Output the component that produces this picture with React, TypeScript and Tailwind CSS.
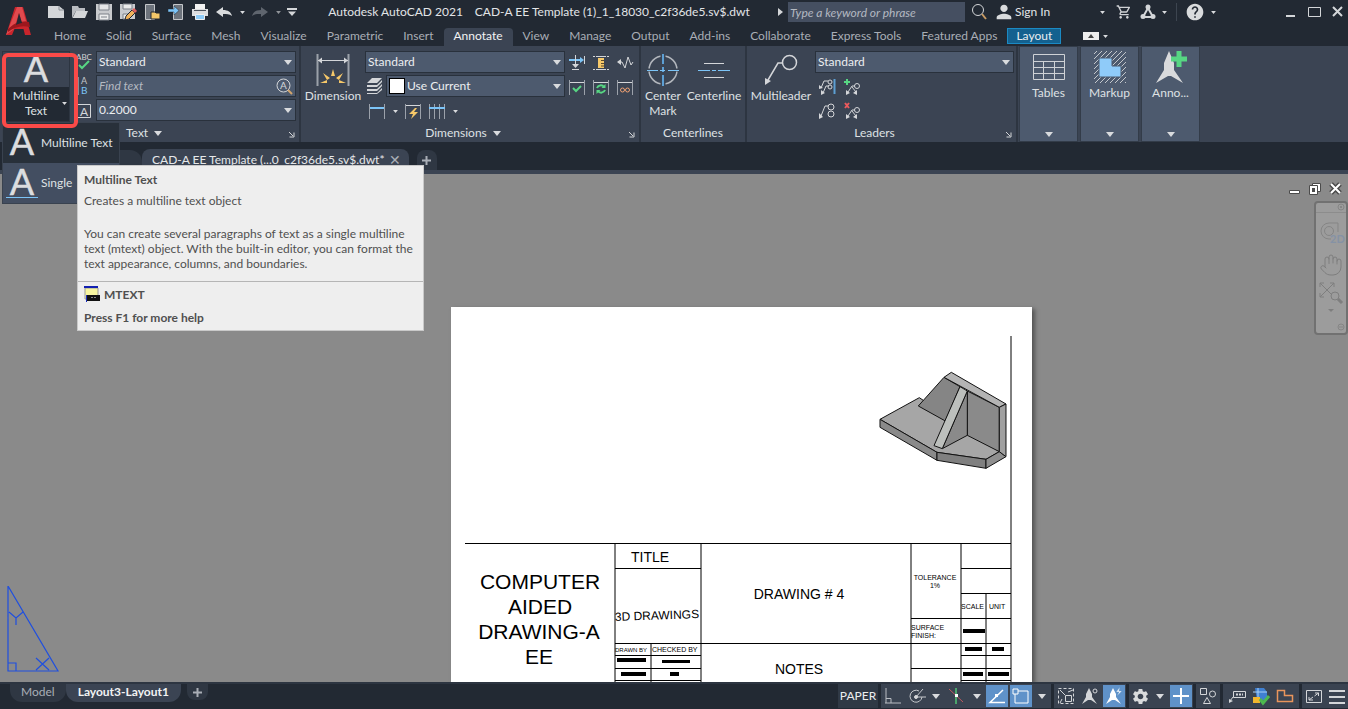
import type { ReactNode } from 'react'
import clsx from 'clsx'
import { MdHelp, MdPerson, MdSettings, MdOutlineShoppingCart } from 'react-icons/md'
import { Hand } from 'lucide-react'

const menuTabs = [
  'Home', 'Solid', 'Surface', 'Mesh', 'Visualize', 'Parametric', 'Insert', 'Annotate', 'View',
  'Manage', 'Output', 'Add-ins', 'Collaborate', 'Express Tools', 'Featured Apps',
]

type IconProps = { w?: number; h?: number; children: ReactNode }

function Icon({ w = 18, h = 18, children }: IconProps) {
  return (
    <svg width={w} height={h} viewBox={`0 0 ${w} ${h}`} fill="none" stroke="#d4d6d9" aria-hidden="true" className="block shrink-0 overflow-visible">
      {children}
    </svg>
  )
}

function Caret({ small, className }: { small?: boolean; className?: string }) {
  return (
    <svg width={small ? 5 : 8} height={small ? 3 : 5} viewBox="0 0 8 5" aria-hidden="true" className={clsx('block shrink-0', className)}>
      <path d="M0 0h8L4 5z" fill="#d9dbde" />
    </svg>
  )
}

function IconButton({ label, className, children }: { label: string; className?: string; children: ReactNode }) {
  return (
    <button aria-label={label} className={clsx('flex h-6 shrink-0 items-center justify-center', className ?? 'w-6')}>
      {children}
    </button>
  )
}

function Combo({ label, value, swatch }: { label: string; value: string; swatch?: boolean }) {
  return (
    <div className="relative flex h-[22px] flex-1 items-center border border-[#29313c] bg-[#4d5a6e]">
      {swatch && <span className="ml-0.5 size-4 shrink-0 border border-black bg-white" />}
      <select aria-label={label} className="h-full w-full appearance-none bg-transparent px-0.5 text-[12px] leading-4 text-[#eceef0] outline-none">
        <option>{value}</option>
      </select>
      <Caret className="pointer-events-none absolute right-[3px]" />
    </div>
  )
}

function Launcher() {
  return (
    <button aria-label="Dialog launcher" className="absolute right-1 bottom-1">
      <Icon w={7} h={7}>
        <path d="M1 1l4 4M6 1.5V6H1.5" />
      </Icon>
    </button>
  )
}

function Panel({ title, menu, launcher, className, children }: { title: string; menu?: boolean; launcher?: boolean; className?: string; children: ReactNode }) {
  return (
    <section className={clsx('relative flex shrink-0 flex-col border-r-2 border-[#2d3541]', className)}>
      <div className="flex flex-1 pt-[5px]">{children}</div>
      <div className={clsx('flex h-[18px] items-center justify-center gap-1.5', launcher && 'pr-3.5')}>
        {title}
        {menu && <Caret />}
      </div>
      {launcher && <Launcher />}
    </section>
  )
}

function BigButton({ className, icon, children }: { className?: string; icon: ReactNode; children: ReactNode }) {
  return (
    <button className={clsx('flex shrink-0 flex-col items-center leading-[15px]', className)}>
      <span className="flex h-[37px] items-center">{icon}</span>
      {children}
    </button>
  )
}

function FoldedPanel({ title, icon }: { title: string; icon: ReactNode }) {
  return (
    <button className="flex h-[96px] w-[59px] shrink-0 flex-col items-center border border-[#333c49] bg-[#4d5a6e] pt-[3px]">
      {icon}
      <span>{title}</span>
      <Caret className="mt-auto mb-1" />
    </button>
  )
}

function Logo() {
  return (
    <svg width="44" height="46" viewBox="0 0 44 46" aria-label="AutoCAD" className="shrink-0">
      <path d="M15 7h8l8 28h-6l-1.500-6h-9l-2.500 6H6z" fill="#c9252c" />
      <path d="M17 7h5l4 14-4 2-3-10-5 16-8 6z" fill="#e04a4e" />
      <path d="M8 29c6-6 13-9 21-7l1 5c-9-2-15 0-22 5z" fill="#9d171d" />
      <path d="M19 13l3 10c-2 0-4 1-6 2z" fill="#222933" />
    </svg>
  )
}

function TitleBar() {
  return (
    <div className="flex h-6 items-center">
      <div className="flex items-center">
        <IconButton label="New">
          <Icon><path d="M1 3h11l5 4v8H1z" fill="#d4d6d9" stroke="none" /><path d="M12 3v4h5" stroke="#8b9098" /></Icon>
        </IconButton>
        <IconButton label="Open">
          <Icon><path d="M1 15V3h6l1 2h6v3H5z" fill="#b9bcc1" stroke="none" /><path d="M5 8h12l-3 7H1.500z" fill="#d4d6d9" stroke="none" /></Icon>
        </IconButton>
        <IconButton label="Save">
          <Icon><path d="M1 1h16v16H1z" fill="#c9cbce" stroke="none" /><path d="M4 1h10v6H4z" fill="#e4e5e6" stroke="#7c8189" /><path d="M4 11h10v6H4z" fill="#eceded" stroke="#7c8189" /><path d="M6 14h6" stroke="#7c8189" /></Icon>
        </IconButton>
        <IconButton label="Save As">
          <Icon><path d="M1 1h15v15H1z" fill="#c9cbce" stroke="none" /><path d="M4 1h9v5H4zM4 11h6v5H4z" fill="#e9eaea" stroke="#7c8189" /><path d="M7 13l6-6 3 3-6 6-4 1z" fill="#f2b35c" stroke="#222933" /><path d="M14 6l3 3" stroke="#e0605e" strokeWidth="3" /></Icon>
        </IconButton>
        <IconButton label="Open from Web">
          <Icon><path d="M2.500 1.500h9v15h-9z" fill="#6d737c" stroke="#c5c7ca" /><path d="M8 16V9h4l1 1h4v6z" fill="#f3c769" stroke="#222933" /></Icon>
        </IconButton>
        <IconButton label="Save to Web">
          <Icon><path d="M6.500 1.500h9v15h-9z" fill="#6d737c" stroke="#c5c7ca" /><path d="M1 6h6V3l5 4.500L7 12V9H1z" fill="#7cc4f7" stroke="#222933" strokeWidth=".5" /></Icon>
        </IconButton>
        <IconButton label="Plot">
          <Icon><path d="M4 1h10v5H4z" fill="#f1f1f1" stroke="none" /><path d="M1 6h16v7H1z" fill="#dcdddf" stroke="none" /><path d="M3 7.500h12" stroke="#4b525c" /><path d="M4.500 11.500h9v5h-9z" fill="#8fcbf6" stroke="#eee" /></Icon>
        </IconButton>
        <IconButton label="Undo">
          <Icon><path d="M1 9l7-5v3c5 0 8 2 9 6-3-2-5-2-9-2v3z" fill="#d9dbdd" stroke="none" /></Icon>
        </IconButton>
        <IconButton label="Undo list" className="w-3"><Caret small /></IconButton>
        <IconButton label="Redo">
          <Icon><path d="M17 9l-7-5v3c-5 0-8 2-9 6 3-2 5-2 9-2v3z" fill="#5f656e" stroke="none" /></Icon>
        </IconButton>
        <IconButton label="Redo list" className="w-3"><Caret small className="opacity-60" /></IconButton>
        <IconButton label="Customize" className="w-4">
          <Icon w={10} h={8}><path d="M0 1h10" strokeWidth="2" /><path d="M1 3.500h8L5 8z" fill="#d4d6d9" stroke="none" /></Icon>
        </IconButton>
      </div>
      <h1 className="flex flex-1 justify-center gap-3 text-[12px] text-[#e3e5e8]">
        <span>Autodesk AutoCAD 2021</span>
        <span>CAD-A EE Template (1)_1_18030_c2f36de5.sv$.dwt</span>
      </h1>
      <Icon w={5} h={8}><path d="M0 0l5 4-5 4z" fill="#d4d6d9" stroke="none" /></Icon>
      <input
        aria-label="Search"
        placeholder="Type a keyword or phrase"
        className="ml-[5px] h-5 w-[177px] bg-[#454f61] px-0.5 text-[12px] italic placeholder:text-[#b4b9c1] outline-none"
      />
      <IconButton label="Find" className="w-7">
        <Icon><circle cx="8" cy="7" r="5.500" /><path d="M12 11l4 5" stroke="#c79a62" strokeWidth="2" /></Icon>
      </IconButton>
      <button className="flex w-[101px] items-center text-[12px] text-[#e3e5e8]">
        <MdPerson size={22} className="text-[#d9dbdd]" />
        Sign In
      </button>
      <IconButton label="Account menu" className="w-4"><Caret small /></IconButton>
      <IconButton label="Store" className="w-7"><MdOutlineShoppingCart size={16} className="text-[#d0d2d5]" /></IconButton>
      <IconButton label="Autodesk App Store" className="w-5">
        <Icon w={16} h={16}>
          <path d="M8 4L3 13h10z" strokeWidth="2" /><circle cx="8" cy="3" r="2.500" fill="#d4d6d9" stroke="none" />
          <circle cx="3" cy="12.500" r="2.500" fill="#d4d6d9" stroke="none" /><circle cx="13" cy="12.500" r="2.500" fill="#d4d6d9" stroke="none" />
        </Icon>
      </IconButton>
      <IconButton label="App menu" className="w-3"><Caret small /></IconButton>
      <span className="mx-1.5 h-[18px] w-px bg-[#3d4550]" />
      <IconButton label="Help"><MdHelp size={20} className="text-[#d9dbdd]" /></IconButton>
      <IconButton label="Help menu" className="w-3"><Caret small /></IconButton>
      <div className="ml-[60px] flex">
        <IconButton label="Minimize" className="w-[22px]"><Icon><path d="M5 13h9" strokeWidth="2" /></Icon></IconButton>
        <IconButton label="Maximize" className="w-[26px]"><Icon><path d="M3.500 4.500h12v9h-12z" /></Icon></IconButton>
        <IconButton label="Close" className="w-[21px]"><Icon w={12} h={12}><path d="M1 1l9 9M10 1l-9 9" strokeWidth="2" /></Icon></IconButton>
      </div>
    </div>
  )
}

function MenuBar() {
  return (
    <nav className="flex h-[22px] items-end text-[12px] text-[#a9aeb6]">
      {menuTabs.map((tab) => (
        <button
          key={tab}
          className={clsx(
            'flex h-[18px] items-start px-2.5 leading-[15px] whitespace-nowrap',
            tab === 'Annotate' && 'rounded-t-sm bg-[#3b4453] text-[#f2f3f4]'
          )}
        >
          {tab}
        </button>
      ))}
      <button className="mb-0.5 h-4 w-[54px] border border-[#1b8ac4] bg-[#14618f] leading-3 text-[#e8edf1]">Layout</button>
      <button aria-label="Minimize ribbon" className="mb-1.5 ml-[22px] flex items-center gap-1">
        <Icon w={16} h={8}><path d="M0 0h16v8H0z" fill="#eee" stroke="none" /><path d="M8 2l3 4H5z" fill="#444" stroke="none" /></Icon>
        <Caret small />
      </button>
    </nav>
  )
}

function LetterA({ underline }: { underline?: boolean }) {
  return (
    <Icon w={34} h={32}>
      <text x="17" y="28" textAnchor="middle" fontSize="36" fill="#dcdddf" stroke="#dcdddf" strokeWidth=".5">A</text>
      {underline && <path d="M1 30.500h32" stroke="#7cc4f7" />}
    </Icon>
  )
}

function HelpTip() {
  return (
    <div role="tooltip" className="absolute top-[43px] left-[75px] z-30 w-[347px] border border-[#c9c9c9] bg-[#eeeeee] text-[12px] leading-[15px] text-[#505050]">
      <div className="px-1.5 pt-1.5 pb-2.5">
        <h2 className="font-bold">Multiline Text</h2>
        <p className="mt-1.5">Creates a multiline text object</p>
        <p className="mt-[18px] whitespace-nowrap">
          You can create several paragraphs of text as a single multiline
          <br />
          text (mtext) object. With the built-in editor, you can format the
          <br />
          text appearance, columns, and boundaries.
        </p>
      </div>
      <div className="border-t border-[#b5b5b5] px-1.5 pt-1 pb-[5px] font-bold">
        <p className="flex items-center gap-1">
          <Icon w={16} h={16}>
            <path d="M1 2h13v11H1z" fill="#f7f5a0" stroke="#999" /><path d="M0 1h14" stroke="#1220b0" strokeWidth="2" />
            <path d="M3 9h13v6H3z" fill="#111" stroke="none" /><path d="M2.500 9v7" stroke="#1b2fc0" /><path d="M7 11.500h6" stroke="#888" strokeDasharray="2 1" />
          </Icon>
          MTEXT
        </p>
        <p className="mt-2">Press F1 for more help</p>
      </div>
    </div>
  )
}

function TextPanel() {
  return (
    <Panel title="" className="w-[301px]">
      <div className="relative ml-0.5 w-[74px]">
        <button className="flex h-[71px] w-[68px] flex-col border border-[#2d3541] leading-[15px]">
          <span className="flex h-[35px] w-full items-center justify-center"><LetterA /></span>
          <span className="relative w-full flex-1 bg-[#222933] pt-px">
            Multiline<br />Text
            <Caret small className="absolute right-0.5 bottom-4" />
          </span>
        </button>
        <div className="pointer-events-none absolute top-[2px] left-0 z-40 h-[75px] w-[76px] rounded-md border-4 border-[#fb4a48]" />
        <div role="menu" className="absolute top-[71px] left-0 z-20 w-[118px] border border-[#39424f] bg-[#434e61] text-left whitespace-nowrap">
          <button role="menuitem" className="flex h-10 w-full items-center gap-0.5 bg-[#28303a] px-0.5"><LetterA />Multiline Text</button>
          <button role="menuitem" className="flex h-10 w-full items-center gap-0.5 px-0.5"><LetterA underline />Single</button>
        </div>
        <div className="absolute top-[71px] left-0"><HelpTip /></div>
      </div>
      <div className="flex w-5 flex-col gap-[2px]">
        <button aria-label="Check spelling" className="h-[22px]">
          <Icon w={18} h={22}><text x="8" y="9" textAnchor="middle" fontSize="8" fill="#d4d6d9" stroke="none">ABC</text><path d="M3 14l3 3 7-7" stroke="#57d683" strokeWidth="2" /></Icon>
        </button>
        <button aria-label="Text align" className="h-[22px]">
          <Icon w={18} h={22}><text x="5" y="9" fontSize="9" fill="#c4c7cb" stroke="none">A</text><text x="5" y="19" fontSize="10" fill="#7cc4f7" stroke="none">B</text><path d="M2 2v18" /></Icon>
        </button>
        <button aria-label="Text height" className="h-[22px]">
          <Icon w={18} h={22}><path d="M1.500 5.500h13v13h-13z" /><text x="8" y="17" textAnchor="middle" fontSize="12" fill="#d4d6d9" stroke="none">A</text></Icon>
        </button>
      </div>
      <div className="mr-[3px] flex flex-1 flex-col gap-[2px]">
        <div className="flex"><Combo label="Text style" value="Standard" /></div>
        <div className="flex h-[22px] items-center border border-[#29313c] bg-[#4d5a6e] pr-0.5">
          <input aria-label="Find text" placeholder="Find text" className="min-w-0 flex-1 bg-transparent px-0.5 text-[12px] italic placeholder:text-[#b4b9c1] outline-none" />
          <button aria-label="Find">
            <Icon w={17} h={17}><circle cx="7.500" cy="7.500" r="6.500" /><text x="7.500" y="11" textAnchor="middle" fontSize="10" fill="#d4d6d9" stroke="none">A</text><path d="M12 12l4 4" stroke="#d3a56d" strokeWidth="2" /></Icon>
          </button>
        </div>
        <div className="flex"><Combo label="Text height" value="0.2000" /></div>
      </div>
      <div className="absolute bottom-0 left-[126px] flex h-[18px] items-center gap-1.5">Text<Caret /></div>
      <Launcher />
    </Panel>
  )
}

const bracket = <path d="M1.500 2v15M16.500 2v15" stroke="#9ba1aa" />

function DimensionsPanel() {
  return (
    <Panel title="Dimensions" menu launcher className="w-[340px]">
      <BigButton
        className="w-[64px]"
        icon={
          <Icon w={34} h={34}>
            <path d="M1.500 1v32M32.500 1v32" stroke="#9ba1aa" strokeWidth="2" />
            <path d="M2 7.500h30" /><path d="M2 7.500l4-3v6zM32 7.500l-4-3v6z" fill="#d4d6d9" stroke="none" />
            <path d="M17 16l2 7h-4zM7 20l7 5-3 2zM27 20l-7 5 3 2zM4 30l7-3v3zM30 30l-7-3v3z" fill="#f6c869" stroke="none" />
          </Icon>
        }
      >
        Dimension
      </BigButton>
      <div className="flex w-[200px] flex-col gap-[2px]">
        <div className="flex"><Combo label="Dimension style" value="Standard" /></div>
        <div className="flex items-center gap-[3px]">
          <Icon>
            <path d="M7 1h10l-5 5H2zM2 8h10l5-5v2l-5 5H2zM2 12h10l5-5v2l-5 5H2zM2 16h10l5-5v2l-5 4H2z" fill="#d4d6d9" stroke="none" />
          </Icon>
          <Combo label="Dimension layer" value="Use Current" swatch />
        </div>
        <div className="flex">
          <IconButton label="Linear"><Icon>{bracket}<path d="M2 6h14" stroke="#7cc4f7" strokeWidth="2" /></Icon></IconButton>
          <IconButton label="Linear menu" className="w-3"><Caret small /></IconButton>
          <IconButton label="Quick dimension"><Icon>{bracket}<path d="M2 3.500h14" /><path d="M11 6l-6 6h4l-2 5 7-7h-4l3-4z" fill="#f6c869" stroke="none" /></Icon></IconButton>
          <IconButton label="Continue"><Icon>{bracket}<path d="M6.500 2v15M11.500 2v15" stroke="#9ba1aa" /><path d="M1 6h16" stroke="#7cc4f7" strokeWidth="2" /></Icon></IconButton>
          <IconButton label="Continue menu" className="w-3"><Caret small /></IconButton>
        </div>
      </div>
      <div className="grid h-[48px] grid-cols-3">
        <IconButton label="Break"><Icon><path d="M1 6h12" stroke="#7cc4f7" strokeWidth="2" /><path d="M12 3l4 3-4 3z" fill="#7cc4f7" stroke="none" /><path d="M7.500 1v11M16.500 2v8M4 15.500h7" /><path d="M4 10h7l-3.500 4z" fill="#d4d6d9" stroke="none" /></Icon></IconButton>
        <IconButton label="Adjust space"><Icon><path d="M1 2.500h16M1 15.500h16" strokeDasharray="2 1 10 1" /><path d="M6 4h6v10H6z" fill="#f6c869" stroke="none" /><path d="M9 6.500h3M9 9.500h3M9 12h3" stroke="#5a4a2c" /></Icon></IconButton>
        <IconButton label="Jogged"><Icon><path d="M2 8h4l3 6 3-11 3 8 2-3" /><path d="M1 8l4-3v6z" fill="#d4d6d9" stroke="none" /></Icon></IconButton>
        <IconButton label="Inspect"><Icon>{bracket}<path d="M2 4.500h14" /><path d="M5 10l3 3 5-5" stroke="#57d683" strokeWidth="2" /></Icon></IconButton>
        <IconButton label="Update"><Icon>{bracket}<path d="M2 4.500h14" /><path d="M5 10a4 4 0 017-1M13 12a4 4 0 01-7 1" stroke="#57d683" strokeWidth="2" /><path d="M13.500 6v4h-4zM4.500 16v-4h4z" fill="#57d683" stroke="none" /></Icon></IconButton>
        <IconButton label="Reassociate"><Icon>{bracket}<path d="M2 4.500h14" /><circle cx="6.500" cy="12" r="2" stroke="#eea072" /><circle cx="11.500" cy="12" r="2" stroke="#eea072" /></Icon></IconButton>
      </div>
    </Panel>
  )
}

function CenterlinesPanel() {
  return (
    <Panel title="Centerlines" className="w-[106px]">
      <BigButton
        className="w-11"
        icon={
          <Icon w={34} h={34}>
            <circle cx="17" cy="17" r="14" stroke="#b3b7bd" strokeWidth="1.500" />
            <path d="M17 0v34" stroke="#3b4453" strokeWidth="5" /><path d="M0 17h34" stroke="#3b4453" strokeWidth="3" />
            <path d="M17 1v10M17 14v5M17 22v11" stroke="#5d9fd3" strokeWidth="2" /><path d="M1 17.500h11M14 17.500h5M22 17.500h11" stroke="#7cc4f7" />
          </Icon>
        }
      >
        <span>Center<br />Mark</span>
      </BigButton>
      <BigButton
        className="w-[58px]"
        icon={<Icon w={34} h={34}><path d="M7 10.500h20M7 24.500h20" strokeWidth="1" /><path d="M1 17.500h12M15 17.500h4M21 17.500h12" stroke="#7cc4f7" /></Icon>}
      >
        Centerline
      </BigButton>
    </Panel>
  )
}

function LeadersPanel() {
  return (
    <Panel title="Leaders" launcher className="w-[271px]">
      <BigButton
        className="w-[68px]"
        icon={<Icon w={34} h={34}><circle cx="25.500" cy="9.500" r="7" strokeWidth="1.500" /><path d="M18 10h-4L4 27" strokeWidth="1.500" /><path d="M1 32V25l6 3z" fill="#d4d6d9" stroke="none" /></Icon>}
      >
        Multileader
      </BigButton>
      <div className="mr-0.5 flex flex-1 flex-col">
        <div className="mb-[2px] flex"><Combo label="Multileader style" value="Standard" /></div>
        <div className="grid w-[50px] grid-cols-2">
          <IconButton label="Align"><Icon><path d="M3 10l3-7h4M5 15l3-7h3" /><circle cx="12" cy="4" r="2" /><circle cx="12" cy="9" r="2" /><path d="M1 11V7l4 3zM3 17v-5l4 3z" fill="#d4d6d9" stroke="none" /><path d="M16.500 1v15" stroke="#5d9fd3" strokeWidth="2" /></Icon></IconButton>
          <IconButton label="Add leader"><Icon><path d="M4 1v6M1 4h6" stroke="#57d683" strokeWidth="2" /><circle cx="14" cy="8" r="2.500" /><path d="M12 8H9l-4 6M9 9l4 5" /><path d="M3 17v-5l4 3zM14 17v-5l-4 3z" fill="#d4d6d9" stroke="none" /></Icon></IconButton>
          <IconButton label="Collect"><Icon><path d="M3 14L7 4h3" /><circle cx="13" cy="5" r="3" /><circle cx="13" cy="12" r="3" /><path d="M1 17v-6l4 4z" fill="#d4d6d9" stroke="none" /></Icon></IconButton>
          <IconButton label="Remove leader"><Icon><path d="M2 1l4 5M6 1L2 6" stroke="#ec5a5d" strokeWidth="2" /><circle cx="14" cy="8" r="2.500" /><path d="M12 8H9l-4 6M9 9l4 5" /><path d="M3 17v-5l4 3zM14 17v-5l-4 3z" fill="#d4d6d9" stroke="none" /></Icon></IconButton>
        </div>
      </div>
    </Panel>
  )
}

function Ribbon() {
  return (
    <div className="flex h-[97px] border-b border-[#222933] bg-[#3b4453] text-[12px] text-[#dfe1e4]">
      <TextPanel />
      <DimensionsPanel />
      <CenterlinesPanel />
      <LeadersPanel />
      <div className="flex gap-[2px] pl-px">
        <FoldedPanel
          title="Tables"
          icon={<Icon w={34} h={34}><path d="M1.500 4.500h31v25h-31zM1.500 11.500h31M1.500 17.500h31M1.500 23.500h31M11.500 11v18M22.500 11v18" stroke="#cfd2d6" /></Icon>}
        />
        <FoldedPanel
          title="Markup"
          icon={
            <Icon w={34} h={34}>
              <defs><pattern id="hatch" width="5" height="5" patternUnits="userSpaceOnUse"><path d="M-1 6L6-1" stroke="#c3c7cc" /></pattern></defs>
              <path d="M1 1h32v32H1z" fill="url(#hatch)" stroke="none" /><path d="M6 8h13v8h9v11H6z" fill="#8fcbf9" stroke="#4d5a6e" />
            </Icon>
          }
        />
        <FoldedPanel
          title="Anno..."
          icon={
            <Icon w={34} h={34}>
              <path d="M15 1l5 12v7l9 13-12-7h-3L2 33l8-13v-7z" fill="#d9dadc" stroke="none" />
              <path d="M25 1v16M17 9h16" stroke="#57d683" strokeWidth="5" />
            </Icon>
          }
        />
      </div>
    </div>
  )
}

function FileTabs() {
  return (
    <div className="flex h-[31px] items-end border-b-4 border-[#3b4453] pl-[106px] text-[12px]">
      <span className="h-5 w-9 rounded-tr-xl bg-[#2f3743]" />
      <button className="flex h-[21px] items-center rounded-t-lg bg-[#3b4453] pr-2 pl-2.5 text-[#e6e8ea]">
        CAD-A EE Template (...0_c2f36de5.sv$.dwt*
        <span className="ml-1 text-[14px] leading-4 text-[#a9aeb6]">✕</span>
      </button>
      <button aria-label="New drawing" className="ml-2 flex h-5 w-5 items-center justify-center rounded-t-lg bg-[#2f3743]">
        <Icon w={9} h={9}><path d="M4.500 0v9M0 4.500h9" stroke="#a9aeb6" strokeWidth="2" /></Icon>
      </button>
    </div>
  )
}

const sheetBars = [
  [617, 658, 29, 4], [662, 660, 28, 3], [621, 672, 25, 4], [670, 672, 9, 4],
  [963, 629, 22, 4], [965, 647, 17, 4], [992, 647, 12, 4], [963, 672, 20, 4], [988, 672, 21, 4],
]

function Sheet() {
  return (
    <svg
      width="581"
      height="375"
      viewBox="451 307 581 375"
      className="absolute top-[133px] left-[451px] bg-white font-['Liberation_Sans',sans-serif] shadow-[3px_2px_4px_#555]"
    >
      <path
        d="M465 543.500h546M615 568.500h86M615 643.500h396M911 618.500h100M961 568.500h50M961 593.500h50M615 655.500h86M615 668.500h86M615 680.500h86M961 655.500h50M911 668.500h100M961 680.500h50"
        stroke="#000"
      />
      <path d="M1011 336v346M615 544v138M701 544v138M651 644v38M911 544v138M961 544v138M986 594v88" stroke="#000" />
      {sheetBars.map(([x, y, w, h]) => (
        <rect key={`${x}-${y}`} x={x} y={y} width={w} height={h} />
      ))}
      <g fontSize="21" textAnchor="middle">
        <text x="540" y="589">COMPUTER</text>
        <text x="540" y="614">AIDED</text>
        <text x="539" y="639">DRAWING-A</text>
        <text x="539" y="664">EE</text>
      </g>
      <g fontSize="14" textAnchor="middle">
        <text x="650" y="562">TITLE</text>
        <text x="799" y="599">DRAWING # 4</text>
        <text x="799" y="674">NOTES</text>
      </g>
      <text x="615" y="621" fontSize="12" transform="rotate(-2 615 621)">3D DRAWINGS</text>
      <g fontSize="7">
        <text x="615" y="652" fontSize="6">DRAWN BY</text>
        <text x="652" y="652">CHECKED BY</text>
        <text x="935" y="580" textAnchor="middle">TOLERANCE</text>
        <text x="935" y="588" textAnchor="middle">1%</text>
        <text x="961" y="609">SCALE</text>
        <text x="989" y="609">UNIT</text>
        <text x="911" y="630">SURFACE</text>
        <text x="911" y="638">FINISH:</text>
      </g>
      {/* bracket, isometric view */}
      <g transform="translate(860 320) scale(.3333)" stroke="#111" strokeWidth="3" strokeLinejoin="round">
        <path d="M60 298L178 233 418 395 378 418 231 397z" fill="#a6a6a6" />
        <path d="M60 298L231 397V421L60 322z" fill="#8a8a8a" />
        <path d="M231 397L378 418V445L231 421z" fill="#808080" />
        <path d="M378 418L418 395 438 410 378 445z" fill="#8f8f8f" />
        <path d="M175 258L252 172 300 200 256 303z" fill="#858585" />
        <path d="M322 213L418 262V395L322 346z" fill="#8a8a8a" />
        <path d="M252 172L274 157 438 252 418 262z" fill="#b4b4b4" />
        <path d="M418 262L438 252V410L418 395z" fill="#a0a0a0" />
        <path d="M322 213V346L247 386z" fill="#8a8a8a" />
        <path d="M300 200L322 213 247 386 222 377z" fill="#bcbfbc" />
      </g>
    </svg>
  )
}

function NavBar() {
  return (
    <div className="absolute top-[27px] right-0 flex h-[134px] w-[34px] flex-col items-center rounded border-2 border-[#717171] bg-[#9c9c9c]">
      <Icon w={30} h={10}><circle cx="25" cy="4" r="3" stroke="#858585" /><path d="M24 3l2 2M26 3l-2 2" stroke="#858585" /><path d="M0 9.500h30" stroke="#8c8c8c" /></Icon>
      <button aria-label="Steering wheel" className="mt-1.5">
        <Icon w={26} h={26}><path d="M20 13V4h-9a8 8 0 100 16h2" stroke="#858585" /><circle cx="11" cy="12" r="4.500" stroke="#858585" /><text x="12" y="24" fontSize="11" fontWeight="bold" fill="#8592a5" stroke="none">2D</text></Icon>
      </button>
      <button aria-label="Pan" className="mt-2"><Hand size={24} strokeWidth={1} color="#7e7e7e" /></button>
      <button aria-label="Zoom extents" className="mt-1">
        <Icon w={26} h={24}><path d="M2 2l14 14M16 2L2 16M2 6V2h4M12 2h4v4M2 12v4h4" stroke="#7e7e7e" /><circle cx="17" cy="15" r="4" stroke="#7e7e7e" fill="#9c9c9c" /><path d="M20 18l4 4" stroke="#7e7e7e" strokeWidth="3" /></Icon>
      </button>
      <Icon w={6} h={8}><path d="M0 4h6L3 7z" fill="#7e7e7e" stroke="none" /></Icon>
      <Icon w={30} h={14}><circle cx="25" cy="14" r="3" stroke="#858585" /><path d="M23 14h4" stroke="#858585" /></Icon>
    </div>
  )
}

function Canvas() {
  return (
    <main className="relative flex-1 overflow-hidden bg-[#8a8a8a]">
      <Sheet />
      <svg width="60" height="96" viewBox="0 0 60 96" fill="none" stroke="#1f4fdf" className="absolute bottom-0 left-0">
        <path d="M8 0v85h50zM8 77h8v8M9 26l7 6 7-6M16 32v7M36 72l13 12M36 84l13-12" strokeWidth="1.200" />
      </svg>
      <div className="absolute top-2 right-[6px] flex gap-2">
        <button aria-label="Minimize drawing"><Icon w={13} h={13}><path d="M1.500 8.500h10v3h-10z" fill="#fff" stroke="#4b4b4b" /></Icon></button>
        <button aria-label="Restore drawing"><Icon w={12} h={13}><path d="M3.500 1.500h8v8h-8z" fill="#fff" stroke="#4b4b4b" /><path d="M.5 3.500h8v9h-8z" fill="#fff" stroke="#4b4b4b" /><path d="M3 6h3v4H3z" fill="#4b4b4b" stroke="none" /></Icon></button>
        <button aria-label="Close drawing"><Icon w={13} h={13}><path d="M2 2l9 9M11 2l-9 9" stroke="#4b4b4b" strokeWidth="5" /><path d="M2 2l9 9M11 2l-9 9" stroke="#fff" strokeWidth="2" /></Icon></button>
      </div>
      <NavBar />
    </main>
  )
}

const person = 'M8 1l3 6v3l5 7-6-4H7l-6 4 4-7V7z'

function StatusBar() {
  const group = 'flex h-6 items-center bg-[#3a4351]'
  const on = 'w-6 border border-[#3a4351] bg-[#5f92c9]'
  return (
    <footer className="flex h-[27px] items-start justify-between border-t-2 border-[#2d3541] text-[12px]">
      <div className="flex pl-[10px]">
        <button className="flex h-[18px] items-start rounded-b-xl bg-[#2f3743] px-[11px] leading-[15px] text-[#a9aeb6]">Model</button>
        <button className="flex h-[18px] items-start rounded-b-xl bg-[#3b4453] px-3 leading-[15px] font-bold text-[#f2f3f4]">Layout3-Layout1</button>
        <button aria-label="New layout" className="ml-1.5 flex h-4 w-[21px] items-center justify-center rounded-b-lg bg-[#2f3743]">
          <Icon w={9} h={9}><path d="M4.500 0v9M0 4.500h9" stroke="#a9aeb6" strokeWidth="2" /></Icon>
        </button>
      </div>
      <div className="flex gap-[3px]">
        <button className="h-6 w-10 bg-[#303945] text-[#eceef0]">PAPER</button>
        <div className={group}>
          <IconButton label="Ortho"><Icon><path d="M2 1v15M1 16h16M2 11.500h5V16" stroke="#b9bdc3" /></Icon></IconButton>
          <IconButton label="Polar"><Icon><path d="M11 4a6 6 0 10 3 6M8 10h10M8 10l7-8" stroke="#c6c9cd" /><circle cx="8" cy="10" r="1.500" fill="#d4d6d9" /></Icon></IconButton>
          <IconButton label="Polar menu" className="w-[14px]"><Caret /></IconButton>
          <IconButton label="Isometric" className="w-[26px]"><Icon><path d="M9 1v16" stroke="#4ba56c" strokeWidth="2" /><path d="M2 2l14 13" stroke="#c15b60" /><path d="M8 7h3v3H8z" fill="#fff" stroke="none" /></Icon></IconButton>
          <IconButton label="Isometric menu" className="w-4"><Caret /></IconButton>
          <IconButton label="Object tracking" className={on}><Icon><path d="M15 3L2 15.500h15" stroke="#fff" strokeWidth="1.500" /><path d="M7 7h3v3H7z" fill="#fff" stroke="none" /></Icon></IconButton>
          <IconButton label="Object snap" className={on}><Icon><path d="M3 4h13v12H3z" stroke="#fff" /><path d="M1 2h5v5H1z" fill="#5f92c9" stroke="#fff" /></Icon></IconButton>
          <IconButton label="Object snap menu" className="w-[18px]"><Caret /></IconButton>
        </div>
        <div className={group}>
          <IconButton label="Transparency"><Icon><path d="M1.500 1.500h15v15h-15z" strokeDasharray="3 2" /><path d="M8.500 8.500h6v6h-6zM3 3l5 5M11 5l5-2M5 12l-2 4" /></Icon></IconButton>
          <IconButton label="Annotation visibility"><Icon><path d={person} fill="#d4d6d9" stroke="none" /><circle cx="14" cy="4" r="2" fill="#3a4351" /></Icon></IconButton>
          <IconButton label="Auto scale" className={on}><Icon><path d={person} fill="#fff" stroke="none" /><path d="M15 0l-4 5h3l-2 4 5-5h-3z" fill="#fff" stroke="#5f92c9" strokeWidth=".5" /></Icon></IconButton>
        </div>
        <div className={group}>
          <IconButton label="Workspace" className="w-[22px]"><MdSettings size={19} className="text-[#d9dbdd]" /></IconButton>
          <IconButton label="Workspace menu" className="w-[18px]"><Caret /></IconButton>
          <IconButton label="Annotation monitor" className={on}><Icon><path d="M9 1v16M1 9h16" stroke="#fff" strokeWidth="2" /></Icon></IconButton>
        </div>
        <div className={group}>
          <IconButton label="Isolate objects"><Icon><path d="M1.500 1.500h6v6h-6zM4.500 16.500l3.500-6 3.500 6z" /><circle cx="13.500" cy="7" r="3" /></Icon></IconButton>
        </div>
        <div className={clsx(group, 'px-0.5')}>
          <IconButton label="Notification"><Icon><path d="M5.500 4.500h12v6h-12zM5 10l-3 4" /><path d="M8 7.500h7" strokeWidth="2" strokeDasharray="2 1" /><path d="M1 16v-4l4 2z" fill="#d4d6d9" stroke="none" /></Icon></IconButton>
          <IconButton label="Units"><Icon><path d="M3 1h9l3 4v8H5z" fill="#3f7fd0" stroke="none" /><path d="M1 5h14M6 1v10" stroke="#a9d0f5" /><path d="M1 10h7v6H1z" fill="#f1b62e" stroke="none" /><path d="M8 12l3 4 6-7" stroke="#4db84f" strokeWidth="3" /></Icon></IconButton>
          <IconButton label="Performance"><Icon><path d="M1.500 3.500h7v5h8v6h-15z" stroke="#e9955c" strokeWidth="1.500" /></Icon></IconButton>
        </div>
        <div className={group}>
          <IconButton label="Clean screen"><Icon><path d="M1.500 3.500h15v12h-15zM9.500 9l4-3M10 6h3.500v3M8 10l-4 3M4 10v3h4" /></Icon></IconButton>
          <IconButton label="Customization" className="w-[22px]"><Icon><path d="M1 4h16M1 10h16M1 16h16" strokeWidth="2" /></Icon></IconButton>
        </div>
      </div>
    </footer>
  )
}

export default function App() {
  return (
    <div className="flex min-h-screen flex-col bg-[#222933] font-['Lato','Open_Sans',sans-serif] text-[12px]">
      <header className="flex">
        <Logo />
        <div className="min-w-0 flex-1">
          <TitleBar />
          <MenuBar />
        </div>
      </header>
      <Ribbon />
      <FileTabs />
      <Canvas />
      <StatusBar />
    </div>
  )
}
